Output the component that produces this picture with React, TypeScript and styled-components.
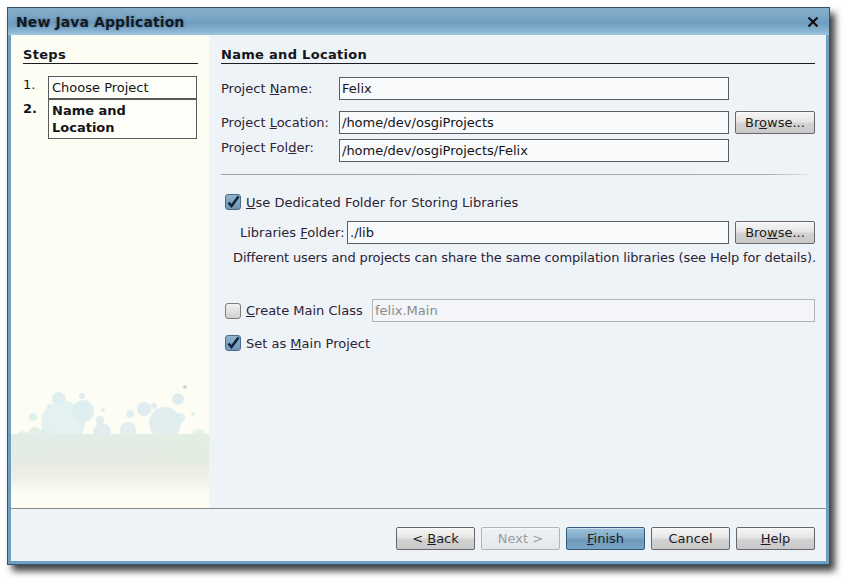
import React from "react";
import styled, { createGlobalStyle } from "styled-components";

const Global = createGlobalStyle`
  html, body { margin: 0; padding: 0; background: #ffffff; }
  body { font-family: "DejaVu Sans", "Liberation Sans", sans-serif; font-size: 13px; color: #2c2336; }
  * { box-sizing: border-box; }
`;

const Page = styled.div`
  padding: 7px 0 0 7px;
  width: 853px;
  height: 588px;
`;

const Window = styled.div`
  width: 823px;
  height: 558px;
  border: 1px solid #34526c;
  background: #6f9fc3;
  display: flex;
  flex-direction: column;
  box-shadow: 5px 6px 7px rgba(0, 0, 0, 0.75);
`;

const TitleBar = styled.div`
  height: 27px;
  flex: none;
  display: flex;
  align-items: center;
  justify-content: space-between;
  padding: 0 10px 0 8px;
  background: linear-gradient(#86aecb 0%, #7aa5c6 35%, #6f9cbf 55%, #88b3d1 85%, #9ec4de 100%);
`;

const Title = styled.div`
  font-weight: bold;
  font-size: 14px;
  color: #111a24;
  text-shadow: 0 0 3px rgba(20, 40, 60, 0.35);
  letter-spacing: 0.1px;
`;

const CloseBox = styled.div`
  width: 12px;
  height: 12px;
  display: flex;
`;

const Client = styled.div`
  flex: 1;
  margin: 0 3px 3px 3px;
  display: flex;
  flex-direction: column;
  background: #eef3f8;
  min-width: 0;
`;

const Main = styled.div`
  height: 474px;
  display: flex;
  border-bottom: 1px solid #8a8c90;
`;

const StepsPanel = styled.div`
  width: 198px;
  flex: none;
  background: #fdfdf4;
  padding: 12px 11px 0 12px;
  display: flex;
  flex-direction: column;
`;

const FormPanel = styled.div`
  flex: 1;
  min-width: 0;
  padding: 12px 11px 0 12px;
  display: flex;
  flex-direction: column;
`;

const SectionHeader = styled.div`
  font-weight: bold;
  font-size: 13px;
  line-height: 16px;
  color: #141418;
  border-bottom: 1px solid #1c1c20;
  letter-spacing: 0.3px;
`;

const StepList = styled.div`
  margin-top: 12px;
  display: flex;
  flex-direction: column;
`;

const StepRow = styled.div`
  display: flex;
  align-items: flex-start;
`;

const StepNum = styled.div<{ $current?: boolean }>`
  width: 25px;
  flex: none;
  font-weight: ${(p) => (p.$current ? "bold" : "normal")};
  line-height: 17px;
  padding-top: ${(p) => (p.$current ? "1px" : "0")};
  color: #141418;
`;

const StepBox = styled.div<{ $current?: boolean }>`
  width: 149px;
  border: 1px solid #5a5a5e;
  background: #fefef9;
  padding: 2px 4px 2px 3px;
  line-height: 17px;
  font-weight: ${(p) => (p.$current ? "bold" : "normal")};
  color: #141418;
  min-height: ${(p) => (p.$current ? "40px" : "23px")};
`;

const Bubbles = styled.svg`
  margin-top: auto;
  margin-left: -12px;
  margin-right: -11px;
  display: block;
  flex: none;
`;

const Row = styled.div<{ $top: number; $indent?: number }>`
  display: flex;
  align-items: center;
  margin-top: ${(p) => p.$top}px;
  padding-left: ${(p) => p.$indent ?? 0}px;
`;

const Label = styled.label<{ $w: number; $raise?: boolean }>`
  width: ${(p) => p.$w}px;
  flex: none;
  white-space: nowrap;
  align-self: ${(p) => (p.$raise ? "flex-start" : "auto")};
  line-height: ${(p) => (p.$raise ? "18px" : "normal")};
`;

const TextField = styled.div<{ $w?: number; $h?: number; $disabled?: boolean }>`
  width: ${(p) => (p.$w ? `${p.$w}px` : "auto")};
  flex: ${(p) => (p.$w ? "none" : "1")};
  min-width: 0;
  height: ${(p) => p.$h ?? 23}px;
  border: 1px solid ${(p) => (p.$disabled ? "#b4b6ba" : "#5c5c60")};
  background: ${(p) => (p.$disabled ? "#f3f5f8" : "#f8fafc")};
  color: ${(p) => (p.$disabled ? "#8a8a8e" : "#141418")};
  display: flex;
  align-items: center;
  padding-left: 2px;
  white-space: nowrap;
  overflow: hidden;
`;

const Button = styled.button<{ $variant?: "default" | "primary" | "disabled"; $ml?: number; $w?: number }>`
  width: ${(p) => p.$w ?? 79}px;
  height: 23px;
  flex: none;
  margin-left: ${(p) => p.$ml ?? 0}px;
  font-family: "DejaVu Sans", "Liberation Sans", sans-serif;
  font-size: 13px;
  padding: 0;
  border-radius: 2px;
  border: 1px solid
    ${(p) => (p.$variant === "primary" ? "#345a7c" : p.$variant === "disabled" ? "#b0b4b8" : "#66686c")};
  color: ${(p) => (p.$variant === "disabled" ? "#9a9ca0" : "#1c1c22")};
  background: ${(p) =>
    p.$variant === "primary"
      ? "linear-gradient(#9bc0da 0%, #82acca 45%, #6e99bb 55%, #7aa3c3 100%)"
      : p.$variant === "disabled"
      ? "linear-gradient(#eef1f4, #e4e8ec)"
      : "linear-gradient(#f6f6f6 0%, #e6e6e6 45%, #d2d2d2 55%, #c9c9c9 100%)"};
  box-shadow: inset 0 1px 0 rgba(255, 255, 255, 0.5);
`;

const Separator = styled.div<{ $top: number }>`
  margin-top: ${(p) => p.$top}px;
  height: 1px;
  background: linear-gradient(90deg, #a0a4aa 0%, #a8acb2 92%, rgba(168, 172, 178, 0) 100%);
`;

const CheckBox = styled.span<{ $checked?: boolean }>`
  width: 16px;
  height: 16px;
  flex: none;
  border-radius: 3px;
  border: 1px solid ${(p) => (p.$checked ? "#4b6a86" : "#7a7c80")};
  background: ${(p) =>
    p.$checked ? "linear-gradient(#8fb3cf, #6d97b8)" : "linear-gradient(#f2f2f2, #d0d0d0)"};
  margin-right: 5px;
  display: flex;
  align-items: center;
  justify-content: center;
`;

const HelpText = styled.div<{ $top: number }>`
  margin-top: ${(p) => p.$top}px;
  padding-left: 12px;
  line-height: 16px;
  white-space: nowrap;
  letter-spacing: -0.13px;
`;

const Footer = styled.div`
  flex: 1;
  display: flex;
  justify-content: flex-end;
  align-items: flex-start;
  gap: 6px;
  padding: 18px 11px 0 0;
`;

const Check = () => (
  <svg width="14" height="14" viewBox="0 0 14 14">
    <path d="M2.5 7.5 L5.5 11 L12.5 1.5" fill="none" stroke="#13233a" strokeWidth="2.6" strokeLinejoin="miter" />
  </svg>
);

const Mark = ({ on }: { on?: boolean }) => <CheckBox $checked={on}>{on ? <Check /> : null}</CheckBox>;

const bubbleCircles: [number, number, number, string][] = [
  [48, 21, 7, "#dcecf0"],
  [52, 45, 22, "#e0f1f1"],
  [72, 33, 11, "#dcecf0"],
  [71, 18, 3, "#dcecf0"],
  [22, 39, 4, "#dcf0ec"],
  [38, 28, 2, "#dcecf0"],
  [89, 42, 4, "#dcecf0"],
  [92, 32, 2, "#dcecf0"],
  [91, 54, 9, "#e0eaee"],
  [119, 36, 4, "#dcecf0"],
  [117, 52, 8, "#e0eaee"],
  [133, 31, 7, "#dcebf0"],
  [143, 28, 3, "#dcebf0"],
  [154, 45, 16, "#deecec"],
  [167, 21, 6, "#dcebf0"],
  [169, 40, 5, "#dceeee"],
  [174, 9, 2, "#d0d0d0"],
  [182, 36, 2, "#dceeee"],
  [12, 59, 6, "#e0eee8"],
  [24, 56, 7, "#e0eee8"],
  [34, 55, 5, "#e0eee8"],
  [188, 58, 7, "#e4f0e2"],
];

const BubbleArt = () => (
  <Bubbles width="198" height="130" viewBox="0 0 198 130">
    <defs>
      <linearGradient id="band" x1="0" y1="0" x2="0" y2="1">
        <stop offset="0" stopColor="#e2ede8" />
        <stop offset="0.45" stopColor="#e5eae2" />
        <stop offset="0.75" stopColor="#f0f2e8" />
        <stop offset="1" stopColor="#fdfdf4" />
      </linearGradient>
      <linearGradient id="bandH" x1="0" y1="0" x2="1" y2="0">
        <stop offset="0" stopColor="#e2eee8" stopOpacity="0.4" />
        <stop offset="0.5" stopColor="#e4eae2" stopOpacity="0" />
        <stop offset="1" stopColor="#e2f0dc" stopOpacity="0.6" />
      </linearGradient>
    </defs>
    {bubbleCircles.map(([cx, cy, r, c], i) => (
      <circle key={i} cx={cx} cy={cy} r={r} fill={c} opacity={0.9} />
    ))}
    <rect x="0" y="56" width="198" height="60" fill="url(#band)" />
    <rect x="0" y="56" width="198" height="30" fill="url(#bandH)" />
  </Bubbles>
);

export default function App() {
  return (
    <>
      <Global />
      <Page>
        <Window>
          <TitleBar>
            <Title>New Java Application</Title>
            <CloseBox>
              <svg width="12" height="12" viewBox="0 0 12 12">
                <path d="M1.5 1.5 L10.5 10.5 M10.5 1.5 L1.5 10.5" stroke="#0c0c0c" strokeWidth="2" />
              </svg>
            </CloseBox>
          </TitleBar>
          <Client>
            <Main>
              <StepsPanel>
                <SectionHeader>Steps</SectionHeader>
                <StepList>
                  <StepRow>
                    <StepNum>1.</StepNum>
                    <StepBox>Choose Project</StepBox>
                  </StepRow>
                  <StepRow>
                    <StepNum $current>2.</StepNum>
                    <StepBox $current>
                      Name and
                      <br />
                      Location
                    </StepBox>
                  </StepRow>
                </StepList>
                <BubbleArt />
              </StepsPanel>
              <FormPanel>
                <SectionHeader>Name and Location</SectionHeader>
                <Row $top={13}>
                  <Label $w={118}>
                    Project <u>N</u>ame:
                  </Label>
                  <TextField $w={390}>Felix</TextField>
                </Row>
                <Row $top={11}>
                  <Label $w={118}>
                    Project <u>L</u>ocation:
                  </Label>
                  <TextField $w={390}>/home/dev/osgiProjects</TextField>
                  <Button $ml={6} $w={80}>
                    Br<u>o</u>wse...
                  </Button>
                </Row>
                <Row $top={5}>
                  <Label $w={118} $raise>
                    Project Fol<u>d</u>er:
                  </Label>
                  <TextField $w={390}>/home/dev/osgiProjects/Felix</TextField>
                </Row>
                <Separator $top={12} />
                <Row $top={19} $indent={4}>
                  <Mark on />
                  <span>
                    <u>U</u>se Dedicated Folder for Storing Libraries
                  </span>
                </Row>
                <Row $top={11} $indent={19}>
                  <Label $w={107}>
                    Libraries <u>F</u>older:
                  </Label>
                  <TextField $w={382}>./lib</TextField>
                  <Button $ml={6} $w={80}>
                    Bro<u>w</u>se...
                  </Button>
                </Row>
                <HelpText $top={6}>
                  Different users and projects can share the same compilation libraries (see Help for details).
                </HelpText>
                <Row $top={33} $indent={4}>
                  <Mark />
                  <Label $w={126}>
                    <u>C</u>reate Main Class
                  </Label>
                  <TextField $disabled>felix.Main</TextField>
                </Row>
                <Row $top={13} $indent={4}>
                  <Mark on />
                  <span>
                    Set as <u>M</u>ain Project
                  </span>
                </Row>
              </FormPanel>
            </Main>
            <Footer>
              <Button>
                &lt; <u>B</u>ack
              </Button>
              <Button $variant="disabled">Next &gt;</Button>
              <Button $variant="primary">
                <u>F</u>inish
              </Button>
              <Button>Cancel</Button>
              <Button>
                <u>H</u>elp
              </Button>
            </Footer>
          </Client>
        </Window>
      </Page>
    </>
  );
}
